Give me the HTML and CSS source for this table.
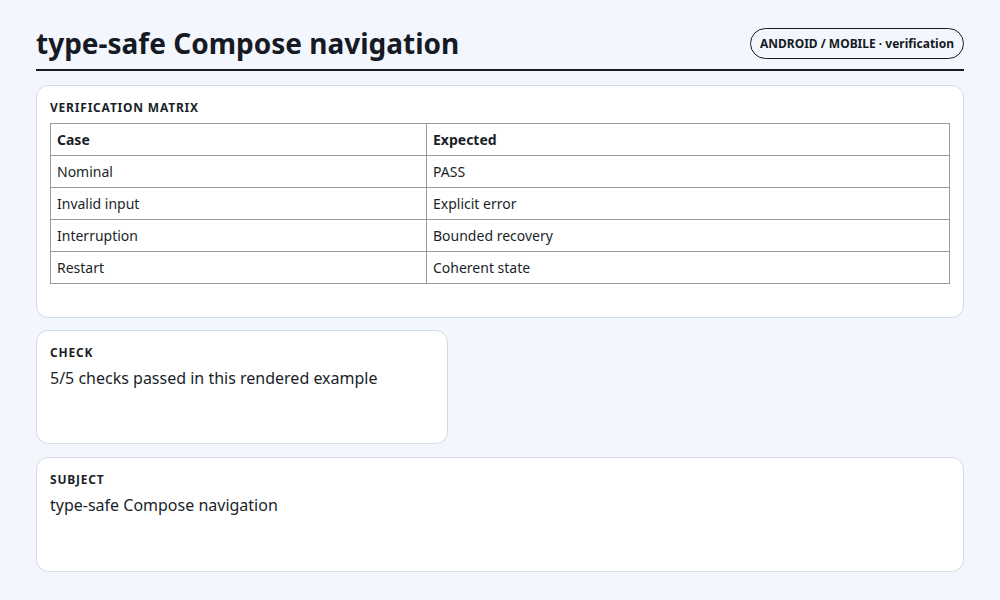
FILE: index.html
```html
<!DOCTYPE html>
<html>
<head>
<meta charset="utf-8">
<link rel="stylesheet" href="styles.css">
</head>
<body>
<div class="page">
  <header class="head">
    <h1 class="title">type-safe Compose navigation</h1>
    <span class="badge">ANDROID / MOBILE · verification</span>
  </header>
  <section class="card matrix">
    <div class="label">VERIFICATION MATRIX</div>
    <table class="tbl">
      <tr><th>Case</th><th>Expected</th></tr>
      <tr><td>Nominal</td><td>PASS</td></tr>
      <tr><td>Invalid input</td><td>Explicit error</td></tr>
      <tr><td>Interruption</td><td>Bounded recovery</td></tr>
      <tr><td>Restart</td><td>Coherent state</td></tr>
    </table>
  </section>
  <section class="card small">
    <div class="label">CHECK</div>
    <p class="text">5/5 checks passed in this rendered example</p>
  </section>
  <section class="card wide">
    <div class="label">SUBJECT</div>
    <p class="text">type-safe Compose navigation</p>
  </section>
</div>
</body>
</html>
```
FILE: styles.css
```css
html, body {
  margin: 0;
  padding: 0;
  background: #f3f6fc;
  font-family: "Noto Sans", "Open Sans", sans-serif;
  color: #1a1f29;
}
.page {
  width: 928px;
  padding: 22px 36px 0;
  display: flex;
  flex-direction: column;
}
.head {
  display: flex;
  justify-content: space-between;
  align-items: center;
  border-bottom: 2px solid #151a24;
  padding-bottom: 5px;
  margin-bottom: 14px;
}
.title {
  margin: 0;
  font-size: 28px;
  font-weight: 700;
  line-height: 42px;
  color: #151a24;
}
.badge {
  border: 1px solid #151a24;
  border-radius: 16px;
  padding: 0 9px;
  height: 29px;
  line-height: 29px;
  font-size: 12px;
  font-weight: 700;
  color: #151a24;
  margin-top: 1px;
}
.card {
  background: #fff;
  border: 1px solid #d3dbe6;
  border-radius: 12px;
  padding: 14px 13px 13px;
  box-sizing: border-box;
  margin-bottom: 12px;
}
.matrix {
  height: 233px;
}
.small {
  width: 412px;
  height: 114px;
  margin-bottom: 13px;
}
.wide {
  height: 115px;
}
.label {
  font-size: 12px;
  font-weight: 700;
  letter-spacing: 0.8px;
  line-height: 16px;
  color: #1a1f29;
}
.tbl {
  margin-top: 7px;
  width: 100%;
  border-collapse: collapse;
  font-size: 14px;
}
.tbl th, .tbl td {
  border: 1px solid #9a9a9a;
  text-align: left;
  padding: 0 6px;
  height: 31px;
  line-height: 20px;
  color: #1a1f29;
}
.tbl th {
  font-weight: 700;
}
.tbl th:first-child, .tbl td:first-child {
  width: 363px;
}
.text {
  margin: 5px 0 0;
  font-size: 16px;
  line-height: 24px;
  color: #1a1f29;
}
```
